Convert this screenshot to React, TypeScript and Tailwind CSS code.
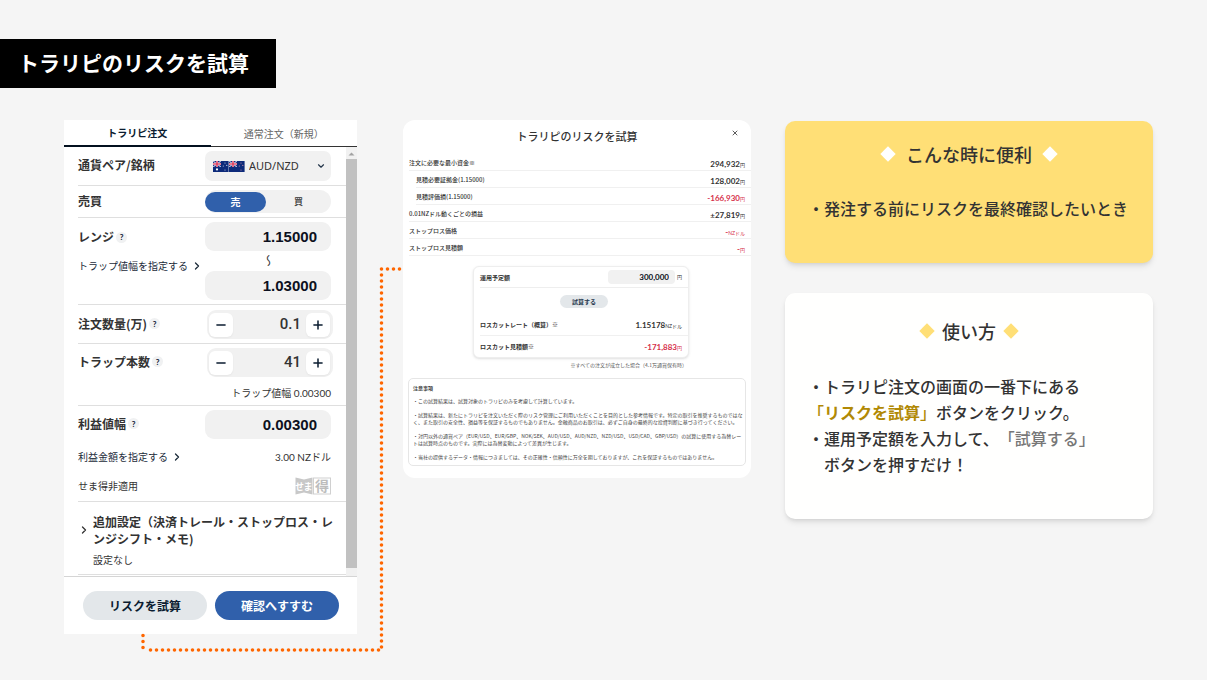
import type { ReactNode } from "react"
import { ChevronDown, ChevronRight, Minus, Plus, X } from "lucide-react"
import clsx from "clsx"

const summaryRows = [
  { label: "注文に必要な最小資金※", value: "294,932", unit: "円" },
  { label: "見積必要証拠金(1.15000)", value: "128,002", unit: "円", indent: true },
  { label: "見積評価損(1.15000)", value: "-166,930", unit: "円", indent: true, red: true },
  { label: "0.01NZドル動くごとの損益", value: "±27,819", unit: "円" },
  { label: "ストップロス価格", value: "-", unit: "NZドル", red: true },
  { label: "ストップロス見積額", value: "-", unit: "円", red: true },
]

const notes = [
  "・この試算結果は、試算対象のトラリピのみを考慮して計算しています。",
  "・試算結果は、新たにトラリピを注文いただく際のリスク管理にご利用いただくことを目的とした参考情報です。特定の取引を推奨するものではなく、また取引の安全性、損益等を保証するものでもありません。金融商品のお取引は、必ずご自身の最終的な投資判断に基づき行ってください。",
  "・対円以外の通貨ペア（EUR/USD、EUR/GBP、NOK/SEK、AUD/USD、AUD/NZD、NZD/USD、USD/CAD、GBP/USD）の試算に使用する為替レートは試算時点のものです。実際には為替変動によって差異が生じます。",
  "・当社の提供するデータ・情報につきましては、その正確性・信頼性に万全を期しておりますが、これを保証するものではありません。",
]

function Flag({ nz }: { nz?: boolean }) {
  return (
    <svg viewBox="0 0 16 11" className="h-[11px] w-4">
      <rect width="15.6" height="11" fill="#0d2a7a" />
      <svg width="8" height="6" viewBox="0 0 8 6">
        <path d="M0 0L8 6M8 0L0 6" stroke="#b9bddc" strokeWidth="1.2" />
        <path d="M4 0V6M0 3H8" stroke="#f3d5de" strokeWidth="2" />
        <path d="M4 0V6M0 3H8" stroke="#d8274b" strokeWidth="1.2" />
      </svg>
      {!nz && <circle cx="4" cy="8.4" r="1.1" fill="#fff" />}
      <g fill={nz ? "#c98aa8" : "#c9d0e8"}>
        <circle cx="12" cy="2" r="0.6" />
        <circle cx="10.3" cy="5" r="0.6" />
        <circle cx="13.8" cy="4.4" r="0.6" />
        <circle cx="12" cy="9" r="0.6" />
      </g>
    </svg>
  )
}

function Diamond({ className }: { className: string }) {
  return (
    <svg viewBox="0 0 16 16" className={clsx("size-4", className)} aria-hidden="true">
      <path d="M8 0.3L15.7 8L8 15.7L0.3 8Z" fill="currentColor" />
    </svg>
  )
}

function SematokuLogo() {
  return (
    <svg
      viewBox="0 0 36 18"
      className="h-[18px] w-9 overflow-visible"
      fontFamily="'Noto Sans CJK JP', sans-serif"
      fontWeight="700"
    >
      <path d="M0.5 0.5L9 2.5L17.5 0.5V17.5L9 15.5L0.5 17.5Z" fill="#c8c8c8" />
      <text x="0" y="12.5" fontSize="9" fill="#fff">せ</text>
      <text x="8.5" y="12.5" fontSize="9" fill="#fff">ま</text>
      <rect x="18.5" y="1" width="17" height="16" fill="#fff" stroke="#d0d0d0" />
      <text x="20" y="14" fontSize="14" fill="#bdbdbd">得</text>
    </svg>
  )
}

function Help() {
  return (
    <button
      type="button"
      className="flex size-[11px] items-center justify-center rounded-full bg-[#f0f1f2] font-['Lato','Noto_Sans_CJK_JP',sans-serif] text-[8px] font-black text-[#1b2a3f]"
    >
      ?
    </button>
  )
}

function Row({ className, children }: { className?: string; children: ReactNode }) {
  return <div className={clsx("border-b border-[#dfdfdf] pr-[15px]", className)}>{children}</div>
}

function Label({ htmlFor, children, help }: { htmlFor?: string; children: ReactNode; help?: boolean }) {
  return (
    <div className="flex items-center gap-0.5 pb-0.5">
      <label htmlFor={htmlFor} className="text-xs font-bold">
        {children}
      </label>
      {help && <Help />}
    </div>
  )
}

function NumberBox({ id, label, value }: { id: string; label: string; value: string }) {
  return (
    <input
      id={id}
      aria-label={label}
      defaultValue={value}
      className="h-[29px] w-[126px] rounded-[9px] bg-[#f1f1f1] pr-[14px] text-right font-['Liberation_Sans',Arial,sans-serif] text-[15px] font-bold text-[#0c1020]"
    />
  )
}

function Stepper({ id, value }: { id: string; value: string }) {
  return (
    <div className="-mr-0.5 flex h-[29px] w-[126px] items-center justify-between rounded-[9px] bg-[#f1f1f1] pr-[3px] pl-0.5">
      <button type="button" aria-label="減らす" className="flex size-6 items-center justify-center rounded-md bg-white text-[#0b1c30] shadow-xs">
        <Minus className="size-[14px]" strokeWidth={2.6} />
      </button>
      <div className="flex items-center gap-[5px]">
        <input
          id={id}
          defaultValue={value}
          className="w-[50px] bg-transparent text-right font-['Roboto',sans-serif] text-[15px] font-medium text-[#333]"
        />
        <button type="button" aria-label="増やす" className="flex size-6 items-center justify-center rounded-md bg-white text-[#0b1c30] shadow-xs">
          <Plus className="size-[14px]" strokeWidth={2.6} />
        </button>
      </div>
    </div>
  )
}

function TextLink({ children }: { children: ReactNode }) {
  return (
    <a href="#" className="flex items-center gap-[3px] text-[10px] leading-4 text-[#1c2b3a]">
      {children}
      <ChevronRight className="size-3" strokeWidth={2.6} />
    </a>
  )
}

function OrderPanel() {
  return (
    <section className="bg-white text-[#333]">
      <div role="tablist" className="flex h-[27px] items-stretch">
        <button type="button" role="tab" aria-selected="true" className="flex-1 border-b-2 border-[#03101f] text-[10px] font-bold text-[#0b1c30]">
          トラリピ注文
        </button>
        <button type="button" role="tab" aria-selected="false" className="flex-1 border-b border-[#333] text-[10px] text-[#666]">
          通常注文（新規）
        </button>
      </div>

      <div className="flex">
        <div className="flex-1 pb-px pl-[14px]">
          <Row className="flex items-center justify-between py-1">
            <Label htmlFor="pair">通貨ペア/銘柄</Label>
            <div className="relative h-[30px] w-[126px]">
              <select id="pair" className="h-[30px] w-full appearance-none rounded-[7px] bg-[#f1f1f1] pl-[44px] font-['Noto_Sans',sans-serif] text-[11px] text-[#333]">
                <option>AUD/NZD</option>
              </select>
              <div className="pointer-events-none absolute inset-y-0 left-2 flex items-center">
                <Flag />
                <Flag nz />
              </div>
              <ChevronDown className="pointer-events-none absolute top-[10px] right-[5px] size-[10px] text-[#24364a]" strokeWidth={2.8} />
            </div>
          </Row>

          <Row className="flex items-center justify-between py-1">
            <Label>売買</Label>
            <div className="flex h-[23px] w-[126px] items-center rounded-full bg-[#f1f1f1]">
              <button type="button" aria-pressed="true" className="h-5 w-[61px] rounded-full bg-[#3060ab] text-[10px] leading-5 font-bold text-white">
                売
              </button>
              <button type="button" aria-pressed="false" className="h-5 flex-1 text-[9px] leading-5 font-medium">
                買
              </button>
            </div>
          </Row>

          <Row className="flex items-start justify-between py-1">
            <div className="space-y-[11px] pt-[7px]">
              <Label htmlFor="range-high" help>レンジ</Label>
              <TextLink>トラップ値幅を指定する</TextLink>
            </div>
            <div className="flex flex-col items-center">
              <NumberBox id="range-high" label="レンジ上限" value="1.15000" />
              <span className="h-5 w-5 text-center text-xs leading-5 [writing-mode:vertical-rl]">〜</span>
              <NumberBox id="range-low" label="レンジ下限" value="1.03000" />
            </div>
          </Row>

          <Row className="flex items-center justify-between pt-[5px] pb-1">
            <Label htmlFor="amount" help>注文数量(万)</Label>
            <Stepper id="amount" value="0.1" />
          </Row>

          <Row className="py-1">
            <div className="flex items-center justify-between">
              <Label htmlFor="traps" help>トラップ本数</Label>
              <Stepper id="traps" value="41" />
            </div>
            <p className="pt-2 text-right font-['Lato','Noto_Sans_CJK_JP',sans-serif] text-[10px] leading-4">トラップ値幅 0.00300</p>
          </Row>

          <Row className="pt-1 pb-[6px]">
            <div className="flex items-center justify-between">
              <Label htmlFor="profit" help>利益値幅</Label>
              <NumberBox id="profit" label="利益値幅" value="0.00300" />
            </div>
            <div className="flex items-center justify-between pt-[10px]">
              <TextLink>利益金額を指定する</TextLink>
              <span className="font-['Lato','Noto_Sans_CJK_JP',sans-serif] text-[10px] leading-4">3.00 NZドル</span>
            </div>
            <div className="flex items-center justify-between pt-3">
              <span className="text-[10px] leading-[18px]">せま得非適用</span>
              <SematokuLogo />
            </div>
          </Row>

          <div className="border-b border-[#dfdfdf] pt-[11px] pb-[6px]">
            <div className="flex items-center gap-[3px]">
              <ChevronRight className="size-3 shrink-0" strokeWidth={2.6} />
              <h3 className="text-xs leading-[17px] font-bold">
                追加設定（決済トレール・ストップロス・レ
                <br />
                ンジシフト・メモ)
              </h3>
            </div>
            <p className="pt-[5px] pl-[15px] text-[10px] leading-4">設定なし</p>
          </div>
        </div>

        <div className="flex w-[11px] flex-col bg-[#f1f1f1]" aria-hidden="true">
          <svg viewBox="0 0 11 12" className="h-3 w-[11px]">
            <path d="M2.5 8.5L5.5 5.5L8.5 8.5Z" fill="#a3a3a3" />
          </svg>
          <div className="mb-2 flex-1 bg-[#c1c1c1]" />
        </div>
      </div>

      <div className="flex gap-2 border-t border-[#d5d5d5] py-[14px] pr-[18px] pl-[19px] text-xs font-bold">
        <button type="button" className="h-[29px] flex-1 rounded-full bg-[#e3e7ea] text-[#0b1c30]">
          リスクを試算
        </button>
        <button type="button" className="h-[29px] flex-1 rounded-full bg-[#3060ab] text-white">
          確認へすすむ
        </button>
      </div>
    </section>
  )
}

function Amount({ value, unit, red }: { value: string; unit: string; red?: boolean }) {
  return (
    <span className={clsx("font-['Lato','Noto_Sans_CJK_JP',sans-serif] text-[8px] font-bold", red ? "text-[#d6304a]" : "text-[#333]")}>
      {value}
      <span className="text-[5px] font-normal">{unit}</span>
    </span>
  )
}

function RiskPanel() {
  return (
    <section className="rounded-xl bg-white pb-3 text-[#333]">
      <div className="relative flex h-[34px] items-center justify-center pb-0.5">
        <h2 className="text-[11px] font-medium">トラリピのリスクを試算</h2>
        <button type="button" aria-label="閉じる" className="absolute top-[9px] right-3">
          <X className="size-2" strokeWidth={2.4} />
        </button>
      </div>

      <dl className="pl-[6px]">
        {summaryRows.map((row) => (
          <div
            key={row.label}
            className={clsx("flex h-[17px] items-center justify-between border-b border-[#f0f0f0] pr-[6px]", row.indent && "ml-[7px]")}
          >
            <dt className="text-[6px] font-medium">{row.label}</dt>
            <dd className="leading-[14px]">
              <Amount value={row.value} unit={row.unit} red={row.red} />
            </dd>
          </div>
        ))}
      </dl>

      <div className="mt-[10px] mr-[62px] ml-[70px]">
        <div className="rounded-md border border-[#eee] bg-white pl-[6px] shadow-sm">
          <div className="flex h-[21px] items-center border-b border-[#eee] pr-[6px]">
            <label htmlFor="funds" className="flex-1 text-[6px] font-bold">
              運用予定額
            </label>
            <input
              id="funds"
              defaultValue="300,000"
              className="h-[14px] w-[67px] rounded-sm bg-[#f1f1f1] pr-[6px] text-right font-['Lato',sans-serif] text-[8px] font-bold text-[#0c1020]"
            />
            <span className="pl-0.5 text-[5px]">円</span>
          </div>
          <div className="flex h-[26px] items-center justify-center">
            <button type="button" className="h-[13px] w-12 rounded-full bg-[#e3e7ea] text-[6px] font-bold text-[#24364a]">
              試算する
            </button>
          </div>
          <div className="flex h-[22px] items-center justify-between border-b border-[#f0f0f0] pr-[6px]">
            <span className="text-[6px] font-bold">ロスカットレート（概算）※</span>
            <Amount value="1.15178" unit="NZドル" />
          </div>
          <div className="flex h-[21px] items-center justify-between pr-[6px]">
            <span className="text-[6px] font-bold">ロスカット見積額※</span>
            <Amount value="-171,883" unit="円" red />
          </div>
        </div>
        <p className="pt-[3px] pr-0.5 text-right text-[5px] leading-[8px] text-[#555]">※すべての注文が成立した場合（4.1万通貨保有時）</p>
      </div>

      <div className="mx-[5px] mt-[9px] rounded-[5px] border border-[#e6e6e6] py-[5px] pl-1 text-[5px] leading-[7px] text-[#444]">
        <h3 className="font-bold">注意事項</h3>
        <div className="space-y-[7px] pt-[6px]">
          {notes.map((note) => (
            <p key={note}>{note}</p>
          ))}
        </div>
      </div>
    </section>
  )
}

export default function App() {
  return (
    <main lang="ja" className="min-h-screen bg-[#f5f5f5] pt-[39px] pb-11 font-['Noto_Sans_CJK_JP',sans-serif]">
      <h1 className="flex h-[49px] w-fit items-center bg-black pr-[27px] pb-0.5 pl-[18px] text-[21px] font-bold text-white">
        トラリピのリスクを試算
      </h1>

      <div className="mt-8 flex items-start pr-[54px] pl-16">
        <div className="relative mr-[46px] min-w-0 flex-[293]">
          <OrderPanel />
          {/* dotted line from the risk button to the result panel */}
          <svg
            viewBox="0 0 262 386"
            className="pointer-events-none absolute top-[147px] left-[77px] h-[386px] w-[262px]"
            fill="none"
            stroke="#ff6600"
            strokeWidth="3.6"
            strokeLinecap="round"
            strokeDasharray="0 6"
            aria-hidden="true"
          >
            <path d="M258.5 2H240.5V383H5M2 368.5V381" />
          </svg>
        </div>

        <div className="mr-[34px] min-w-0 flex-[348]">
          <RiskPanel />
        </div>

        <div className="min-w-0 flex-[368] space-y-[30px] pt-px text-base leading-[26px] font-medium text-[#333]">
          <section className="rounded-[10px] bg-[#ffdf76] px-[23px] pt-[19px] pb-[42px] shadow-md">
            <h2 className="flex items-center justify-center gap-[10px] text-lg leading-7 font-medium">
              <Diamond className="text-white" />
              こんな時に便利
              <Diamond className="text-white" />
            </h2>
            <p className="mt-[27px]">・発注する前にリスクを最終確認したいとき</p>
          </section>

          <section className="rounded-[10px] bg-[#fffffe] px-[23px] pt-6 pb-[42px] shadow-md">
            <h2 className="flex items-center justify-center gap-[7px] text-lg leading-7 font-medium">
              <Diamond className="text-[#ffdf76]" />
              使い方
              <Diamond className="text-[#ffdf76]" />
            </h2>
            <p className="mt-7">
              ・トラリピ注文の画面の一番下にある
              <br />
              <span className="text-[#b18904]">
                「<b className="font-bold">リスクを試算</b>」
              </span>
              ボタンをクリック。
              <br />
              ・運用予定額を入力して、<span className="inline-block text-[#777]">「試算する」</span>
              <br />
              <span className="pl-4">ボタンを押すだけ！</span>
            </p>
          </section>
        </div>
      </div>
    </main>
  )
}
